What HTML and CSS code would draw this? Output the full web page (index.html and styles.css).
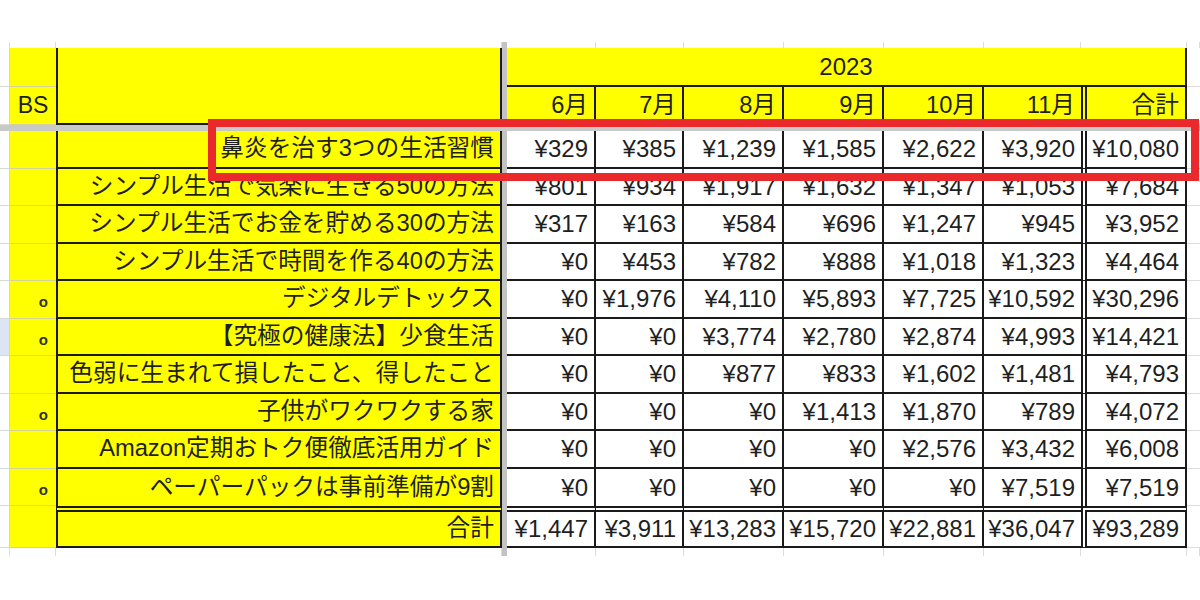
FILE: index.html
```html
<!DOCTYPE html>
<html lang="ja">
<head>
<meta charset="utf-8">
<title>2023 月別売上</title>
<link rel="stylesheet" href="styles.css">
</head>
<body>
<div class="page">
  <div class="sheet">
    <div class="fcol"></div>
    <div class="frow"></div>
    <div class="bhead"></div>
    <div class="year">2023</div>

    <div class="top"></div><div class="top"></div><div class="top"></div><div class="top"></div><div class="top"></div><div class="top"></div><div class="top"></div><div class="top"></div><div class="top"></div><div class="top"></div><div class="top"></div>

    <div class="g"></div><div class="a"></div><div class="r"></div>

    <div class="g"></div><div class="a bs">BS</div>
    <div class="mh">6月</div><div class="mh">7月</div><div class="mh">8月</div><div class="mh">9月</div><div class="mh">10月</div><div class="mh m11">11月</div><div class="mh s">合計</div>
    <div class="r"></div>

    <div class="g"></div><div class="a"></div><div class="t">鼻炎を治す3つの生活習慣</div>
    <div class="n">¥329</div><div class="n">¥385</div><div class="n">¥1,239</div><div class="n">¥1,585</div><div class="n">¥2,622</div><div class="n m11">¥3,920</div><div class="n s">¥10,080</div><div class="r"></div>

    <div class="g"></div><div class="a"></div><div class="t">シンプル生活で気楽に生きる50の方法</div>
    <div class="n">¥801</div><div class="n">¥934</div><div class="n">¥1,917</div><div class="n">¥1,632</div><div class="n">¥1,347</div><div class="n m11">¥1,053</div><div class="n s">¥7,684</div><div class="r"></div>

    <div class="g"></div><div class="a"></div><div class="t">シンプル生活でお金を貯める30の方法</div>
    <div class="n">¥317</div><div class="n">¥163</div><div class="n">¥584</div><div class="n">¥696</div><div class="n">¥1,247</div><div class="n m11">¥945</div><div class="n s">¥3,952</div><div class="r"></div>

    <div class="g"></div><div class="a"></div><div class="t">シンプル生活で時間を作る40の方法</div>
    <div class="n">¥0</div><div class="n">¥453</div><div class="n">¥782</div><div class="n">¥888</div><div class="n">¥1,018</div><div class="n m11">¥1,323</div><div class="n s">¥4,464</div><div class="r"></div>

    <div class="g"></div><div class="a"><span class="o">o</span></div><div class="t">デジタルデトックス</div>
    <div class="n">¥0</div><div class="n">¥1,976</div><div class="n">¥4,110</div><div class="n">¥5,893</div><div class="n">¥7,725</div><div class="n m11">¥10,592</div><div class="n s">¥30,296</div><div class="r"></div>

    <div class="g sel"></div><div class="a"><span class="o">o</span></div><div class="t">【究極の健康法】少食生活</div>
    <div class="n">¥0</div><div class="n">¥0</div><div class="n">¥3,774</div><div class="n">¥2,780</div><div class="n">¥2,874</div><div class="n m11">¥4,993</div><div class="n s">¥14,421</div><div class="r"></div>

    <div class="g"></div><div class="a"></div><div class="t">色弱に生まれて損したこと、得したこと</div>
    <div class="n">¥0</div><div class="n">¥0</div><div class="n">¥877</div><div class="n">¥833</div><div class="n">¥1,602</div><div class="n m11">¥1,481</div><div class="n s">¥4,793</div><div class="r"></div>

    <div class="g"></div><div class="a"><span class="o">o</span></div><div class="t">子供がワクワクする家</div>
    <div class="n">¥0</div><div class="n">¥0</div><div class="n">¥0</div><div class="n">¥1,413</div><div class="n">¥1,870</div><div class="n m11">¥789</div><div class="n s">¥4,072</div><div class="r"></div>

    <div class="g"></div><div class="a"></div><div class="t">Amazon定期おトク便徹底活用ガイド</div>
    <div class="n">¥0</div><div class="n">¥0</div><div class="n">¥0</div><div class="n">¥0</div><div class="n">¥2,576</div><div class="n m11">¥3,432</div><div class="n s">¥6,008</div><div class="r"></div>

    <div class="g"></div><div class="a"><span class="o">o</span></div><div class="t last">ペーパーパックは事前準備が9割</div>
    <div class="n last">¥0</div><div class="n last">¥0</div><div class="n last">¥0</div><div class="n last">¥0</div><div class="n last">¥0</div><div class="n m11 last">¥7,519</div><div class="n s last">¥7,519</div><div class="r"></div>

    <div class="g"></div><div class="a"></div><div class="t sum">合計</div>
    <div class="n sum">¥1,447</div><div class="n sum">¥3,911</div><div class="n sum">¥13,283</div><div class="n sum">¥15,720</div><div class="n sum">¥22,881</div><div class="n m11 sum">¥36,047</div><div class="n s sum">¥93,289</div><div class="r"></div>

    <div class="bot"></div><div class="bot"></div><div class="bot"></div><div class="bot"></div><div class="bot"></div><div class="bot"></div><div class="bot"></div><div class="bot"></div><div class="bot"></div><div class="bot"></div><div class="bot"></div>
  </div>
  <div class="hl"></div>
</div>
</body>
</html>
```

FILE: styles.css
```css
* { box-sizing: border-box; }
html, body { margin: 0; padding: 0; background: #fff; }
body {
  font-family: "Liberation Sans", "Noto Sans CJK JP", sans-serif;
  color: #1f1f1f;
}
.page {
  position: relative;
  width: 1200px;
  height: 600px;
  padding-top: 42px;
  overflow: hidden;
}
.sheet {
  display: grid;
  grid-template-columns: 10px 46px 446px 5px 89px 88px 100px 100px 100px 97px 106px 13px;
  grid-template-rows: 6px 39px 38px 6px 38px 37px 38px 37px 38px 37px 38px 37px 38px 37px 42px 8px;
}
.sheet > div {
  display: flex;
  align-items: center;
  min-width: 0;
  line-height: 1;
  white-space: nowrap;
}
.fcol { grid-column: 4; grid-row: 1 / -1; background: #c3c3c3; }
.frow { grid-column: 1 / -1; grid-row: 4; background: #c9c9c9; }
.bhead {
  grid-column: 3; grid-row: 2 / 4;
  background: #ffff00;
  border-left: 2px solid #1a1a1a;
  border-right: 2px solid #1a1a1a;
  border-bottom: 2px solid #1a1a1a;
}
.year {
  grid-column: 5 / 12; grid-row: 2;
  background: #ffff00;
  border-right: 2px solid #1a1a1a;
  border-bottom: 2px solid #1a1a1a;
  justify-content: center;
  font-size: 24px;
}
.top { border-right: 1px solid #dcdcdc; }
.bot { border-right: 1px solid #dcdcdc; }
.g {
  background: #fff;
  border-right: 1px solid #d3d3d3;
  border-bottom: 1px solid #d8d8d8;
}
.g.sel { background: #dbe5f4; }
.r { background: #fff; border-bottom: 1px solid #dcdcdc; }
.a {
  background: #ffff00;
  border-bottom: 1px solid #d2d29a;
  justify-content: flex-end;
  padding-right: 8px;
}
.a.bs { justify-content: center; padding-right: 0; font-size: 23px; }
.o {
  font-size: 15px;
  font-weight: bold;
  color: #333;
  margin-top: 4px;
}
.t {
  background: #ffff00;
  border-left: 2px solid #1a1a1a;
  border-right: 2px solid #1a1a1a;
  border-bottom: 2px solid #1a1a1a;
  justify-content: flex-end;
  padding-right: 6px;
  font-size: 23.7px;
}
.mh {
  background: #ffff00;
  border-right: 2px solid #1a1a1a;
  justify-content: flex-end;
  padding-right: 6px;
  font-size: 23.7px;
}
.n {
  background: #fff;
  border-right: 2px solid #1a1a1a;
  border-bottom: 2px solid #1a1a1a;
  justify-content: flex-end;
  padding-right: 6px;
  font-size: 24px;
}
.m11 { border-right: 0; }
.s { border-left: 6px double #1a1a1a; border-right: 2px solid #1a1a1a; }
.last { border-bottom: 0; }
.sum { border-top: 6px double #1a1a1a; }
.hl {
  position: absolute;
  left: 208px;
  top: 119px;
  width: 991px;
  height: 62px;
  border: 8px solid #e9292c;
}
```
